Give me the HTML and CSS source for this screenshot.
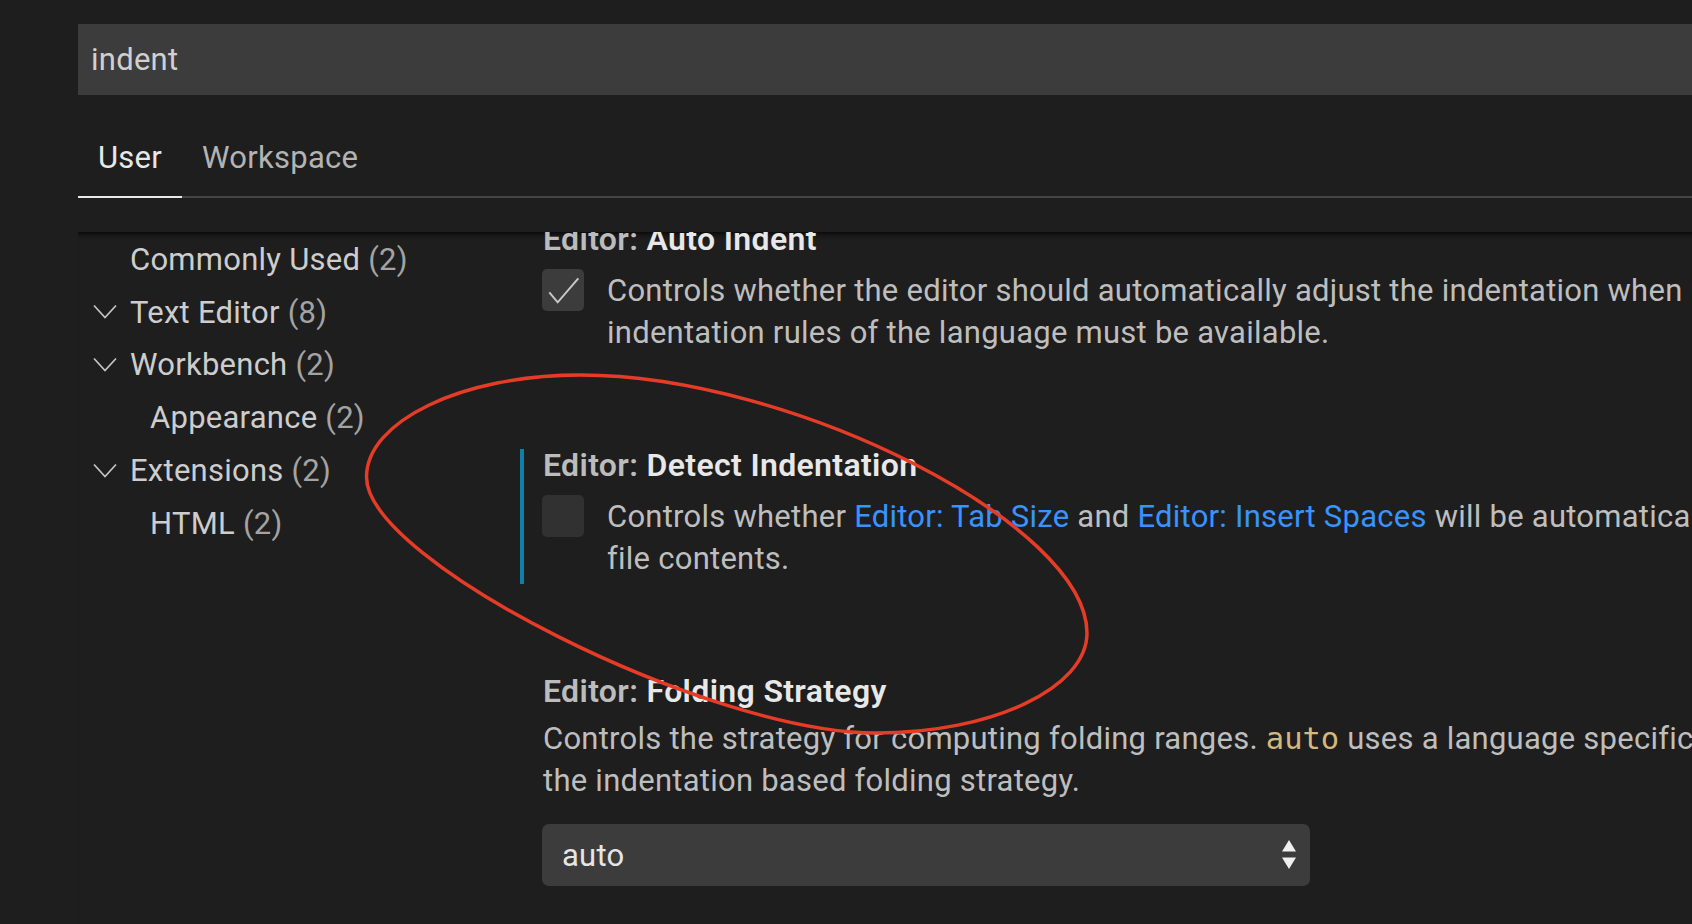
FILE: index.html
```html
<!DOCTYPE html>
<html lang="en">
<head>
<meta charset="utf-8">
<title>Settings</title>
<link rel="stylesheet" href="styles.css">
</head>
<body>
<div class="page">
  <div class="search">indent</div>
  <div class="tabs">
    <div class="tab active">User</div>
    <div class="tab">Workspace</div>
  </div>
  <div class="body">
    <nav class="toc">
      <div class="toc-row"><span class="twist"></span><span class="label">Commonly Used <span class="count">(2)</span></span></div>
      <div class="toc-row"><span class="twist"><svg class="chev" width="24" height="16" viewBox="0 0 24 16"><path d="M1 1.5 L12 13.5 L23 1.5"/></svg></span><span class="label">Text Editor <span class="count">(8)</span></span></div>
      <div class="toc-row"><span class="twist"><svg class="chev" width="24" height="16" viewBox="0 0 24 16"><path d="M1 1.5 L12 13.5 L23 1.5"/></svg></span><span class="label">Workbench <span class="count">(2)</span></span></div>
      <div class="toc-row l2"><span class="twist"></span><span class="label">Appearance <span class="count">(2)</span></span></div>
      <div class="toc-row"><span class="twist"><svg class="chev" width="24" height="16" viewBox="0 0 24 16"><path d="M1 1.5 L12 13.5 L23 1.5"/></svg></span><span class="label">Extensions <span class="count">(2)</span></span></div>
      <div class="toc-row l2"><span class="twist"></span><span class="label">HTML <span class="count">(2)</span></span></div>
    </nav>
    <main class="settings">
      <div class="list">
        <section class="item">
          <div class="contents">
            <div class="title"><span class="cat">Editor: </span>Auto Indent</div>
            <div class="row">
              <span class="check checked"><svg width="42" height="42" viewBox="0 0 42 42"><path d="M7.3 23.3 L15.7 33.3 L36.3 9.3"/></svg></span>
              <div class="desc">Controls whether the editor should automatically adjust the indentation when users type, paste or move lines. Extensions with<br>indentation rules of the language must be available.</div>
            </div>
          </div>
        </section>
        <section class="item modified">
          <div class="contents">
            <div class="title"><span class="cat">Editor: </span>Detect Indentation</div>
            <div class="row">
              <span class="check"></span>
              <div class="desc">Controls whether <span class="link">Editor: Tab Size</span> and <span class="link">Editor: Insert Spaces</span> will be automatically detected when a file is opened based on the<br>file contents.</div>
            </div>
          </div>
        </section>
        <section class="item">
          <div class="contents">
            <div class="title"><span class="cat">Editor: </span>Folding Strategy</div>
            <div class="desc plain">Controls the strategy for computing folding ranges. <code>auto</code> uses a language specific folding strategy if available. <code>indentation</code> uses<br>the indentation based folding strategy.</div>
            <div class="select"><span>auto</span><svg width="14" height="30" viewBox="0 0 14 30"><path d="M0 11.4 L7 0 L14 11.4 Z M0 17.6 L14 17.6 L7 29 Z"/></svg></div>
          </div>
        </section>
      </div>
    </main>
  </div>
  <svg class="annotation" width="1692" height="924" viewBox="0 0 1692 924">
    <path d="M580 375 C793 375 1087 525 1087 633 C1087 688 992 733 876 733 C708 733 366.5 561.5 366.5 477 C366.5 421 462.6 375 580 375 Z"/>
  </svg>
</div>
</body>
</html>
```

FILE: styles.css
```css
html, body {
  margin: 0;
  padding: 0;
  background: #1e1e1e;
  overflow: hidden;
  height: 924px;
}

body {
  font-family: Roboto, "Liberation Sans", sans-serif;
  font-size: 31px;
  letter-spacing: 0.25px;
  color: #cccccc;
}

.page {
  position: relative;
  height: 924px;
  box-sizing: border-box;
  padding: 24px 0 0 78px;
  display: flex;
  flex-direction: column;
}

.search {
  height: 71px;
  flex: none;
  background: #3c3c3c;
  padding-left: 13px;
  display: flex;
  align-items: center;
  color: #d0d0d0;
}

.tabs {
  display: flex;
  flex: none;
  border-bottom: 2px solid #454545;
}

.tab {
  padding: 42.5px 20px 18.5px;
  line-height: 40px;
  color: #b3b3b3;
  margin-bottom: -2px;
  border-bottom: 2px solid transparent;
}

.tab.active {
  color: #e8e8e8;
  border-bottom-color: #e8e8e8;
}

.body {
  flex: 1;
  min-height: 0;
  margin-top: 34px;
  display: flex;
  overflow: hidden;
  box-shadow: inset 0 7px 6px -6px #000;
}

.toc {
  width: 442px;
  flex: none;
  padding-top: 1px;
}

.toc-row {
  height: 52.8px;
  display: flex;
  align-items: center;
  padding-left: 15px;
  white-space: nowrap;
}

.toc-row.l2 {
  padding-left: 35px;
}

.twist {
  width: 37px;
  flex: none;
  display: flex;
  align-items: center;
}

.chev path {
  fill: none;
  stroke: #c5c5c5;
  stroke-width: 1.7;
}

.label {
  color: #cdcdcd;
}

.count {
  color: #a3a3a3;
}

.settings {
  flex: 1;
  min-width: 0;
}

.list {
  margin-top: -9px;
}

.item {
  margin-bottom: 91px;
}

.contents {
  border-left: 4px solid transparent;
  padding: 0 0 4px 19px;
}

.item.modified .contents {
  border-left-color: #0e7fa6;
}

.title {
  height: 30px;
  padding-top: 1px;
  line-height: 30px;
  font-size: 32px;
  letter-spacing: 0.35px;
  font-weight: 600;
  color: #e8e8e8;
  white-space: nowrap;
}

.cat {
  color: #bcbcbc;
}

.row {
  display: flex;
  margin-top: 16px;
}

.check {
  width: 42px;
  height: 42px;
  margin: -1px 23px 0 -1px;
  flex: none;
  border-radius: 5px;
  background: #313131;
}

.check.checked {
  background: #3c3c3c;
}

.check svg {
  display: block;
}

.check path {
  fill: none;
  stroke: #c8c8c8;
  stroke-width: 2;
}

.desc {
  line-height: 42px;
  white-space: nowrap;
  color: #bebebe;
}

.desc.plain {
  margin-top: 12px;
}

.link {
  color: #3794ff;
}

code {
  font-family: "DejaVu Sans Mono", "Liberation Mono", monospace;
  font-size: 30.5px;
  letter-spacing: 0;
  color: #d4b87c;
}

.select {
  width: 768px;
  height: 62px;
  margin: 22px 0 0 -1px;
  box-sizing: border-box;
  border-radius: 7px;
  background: #3c3c3c;
  display: flex;
  align-items: center;
  justify-content: space-between;
  padding: 0 14px 0 20px;
  color: #e6e6e6;
}

.select path {
  fill: #f0f0f0;
}

.annotation {
  position: absolute;
  left: 0;
  top: 0;
  pointer-events: none;
}

.annotation path {
  fill: none;
  stroke: #e63c27;
  stroke-width: 3.5;
}
```
